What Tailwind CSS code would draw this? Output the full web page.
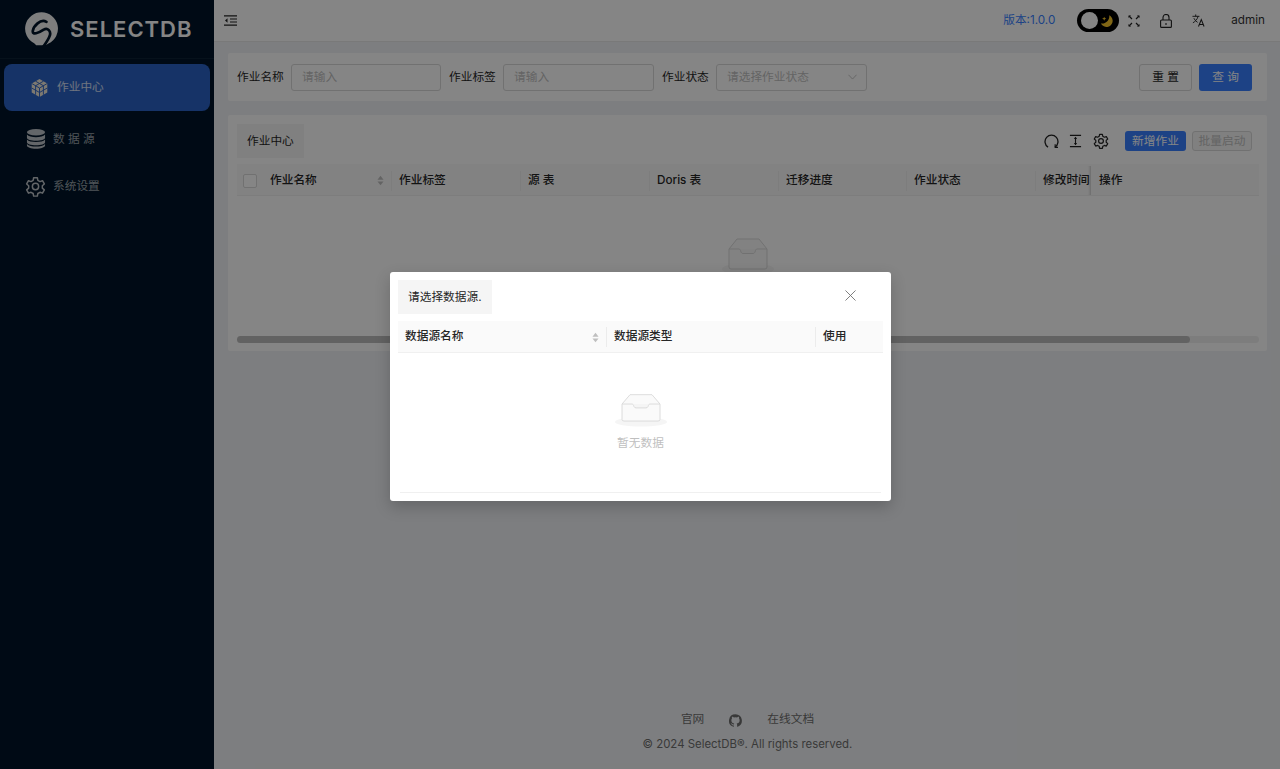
<!DOCTYPE html>
<html lang="zh">
<head>
<meta charset="utf-8">
<script src="https://cdn.jsdelivr.net/npm/@tailwindcss/browser@4"></script>
<title>SelectDB</title>
</head>
<body class="font-['Inter','Noto_Sans_CJK_SC',sans-serif] text-[11.7px] text-[#262626] overflow-hidden">
<div class="relative flex h-[769px] w-[1280px] bg-[#f0f2f5] overflow-hidden">

  <!-- Sidebar -->
  <aside class="w-[214px] shrink-0 bg-[#001529] text-white/60 flex flex-col">
    <div class="h-[59px] pl-[25px] flex items-center gap-[11px] border-b border-white/5">
      <svg viewBox="45 23 100 100" class="w-[34px] h-[34px] shrink-0">
        <path fill="#f2f2f2" d="M94 24a48 48 0 0 1 20 91.600L108 119 100 121 82 121 78 120.500 72 115A48 48 0 0 1 94 24z"/>
        <path fill="none" stroke="#001529" stroke-width="8" stroke-linecap="round" d="M108 52C90 42 70 65 68 78C66 92 85 85 100 75C112 68 122 80 118 92C114 105 108 112 98 126"/>
      </svg>
      <span class="text-[22px] leading-none font-semibold tracking-[1px] text-white">SELECTDB</span>
    </div>
    <nav class="flex flex-col mt-[5px]">
      <a class="mx-[4px] h-[47px] rounded-[8px] bg-[#2b62c6] flex items-center pl-[26px] gap-[8px] text-white/80">
        <svg viewBox="0 0 20 20" class="w-[19px] h-[20px]">
          <path fill="#f0e8d8" d="M10 .5l8.200 4.750v9.500L10 19.500l-8.200-4.750v-9.500z"/>
          <path fill="none" stroke="#2b62c6" stroke-width="1" d="M10 10L1.800 5.250M10 10l8.200-4.750M10 10v9.500M5.900 2.875l8.200 4.750M14.100 2.875L5.900 7.625M1.800 10L10 14.750M18.200 10L10 14.750M5.900 7.625v9.500M14.100 7.625v9.500"/>
        </svg>
        <span class="pt-[1px]">作业中心</span>
      </a>
      <a class="h-[47px] mt-[5px] flex items-center pl-[26px] gap-[7px]">
        <svg viewBox="0 0 21 22" class="w-[20px] h-[22px] mb-[1px]" fill="#fff" fill-opacity=".75">
          <ellipse cx="10.500" cy="4" rx="9.500" ry="3.400"/>
          <path d="M1 6.400c1.500 2 5.300 2.800 9.500 2.800S18.500 8.400 20 6.400v3.300c0 1.900-4.300 3.200-9.500 3.200S1 11.600 1 9.700z"/>
          <path d="M1 11.600c1.500 2 5.300 2.600 9.500 2.600s8-.6 9.500-2.600v2.800c0 1.900-4.300 3.200-9.500 3.200S1 16.300 1 14.400z"/>
          <path d="M1 16.300c1.500 2 5.300 2.700 9.500 2.700s8-.7 9.500-2.700v1.600c0 1.900-4.300 3.400-9.500 3.400S1 19.800 1 17.900z"/>
        </svg>
        <span class="pt-[1px]">数 据 源</span>
      </a>
      <a class="h-[47px] flex items-center pl-[25px] gap-[7px]">
        <svg viewBox="0 0 24 24" class="w-[21px] h-[21px]" fill="none" stroke="#fff" stroke-opacity=".75" stroke-width="1.700" stroke-linejoin="round">
          <path d="M9.900 2h4.200l.6 3 2.400 1.400 2.900-1 2.100 3.700-2.300 2v2.800l2.300 2-2.100 3.700-2.900-1-2.400 1.400-.6 3H9.900l-.6-3-2.400-1.400-2.900 1-2.100-3.700 2.300-2v-2.800l-2.300-2 2.100-3.700 2.900 1 2.400-1.400z"/>
          <circle cx="12" cy="12" r="3.600"/>
        </svg>
        <span class="pt-[1px]">系统设置</span>
      </a>
    </nav>
  </aside>

  <!-- Main -->
  <main class="flex-1 min-w-0 flex flex-col">
    <header class="h-[42px] bg-white border-b border-[#e8e8e8] flex items-center pl-[10px] pr-[15px] shrink-0">
      <svg viewBox="0 0 13 11" class="w-[13px] h-[11px]" fill="none" stroke="#222" stroke-width="1.200">
        <path d="M0 .8h13M6 4h7M6 7h7M0 10.200h13"/><path d="M3.500 3.200L1 5.500l2.500 2.300z" fill="#222" stroke="none"/>
      </svg>
      <div class="ml-auto flex items-center">
        <span class="text-[#387fff] mr-[22px] pt-[1px]">版本:1.0.0</span>
        <div class="w-[42px] h-[23px] rounded-full bg-black flex items-center justify-between pl-[4px] pr-[5px]">
          <span class="w-[17px] h-[17px] rounded-full bg-white"></span>
          <svg viewBox="0 0 16 16" class="w-[14px] h-[14px]" fill="#f7c52b"><path d="M10.500 1.500A7 7 0 1 1 1 10.500c4.500 1.500 10.500-3.500 9.500-9z"/><path d="M4.800 3l.7 1.700 1.700.7-1.700.7-.7 1.700-.7-1.700-1.700-.7 1.700-.7z"/></svg>
        </div>
        <svg viewBox="0 0 12 12" class="w-[12px] h-[12px] ml-[9px]" fill="none" stroke="#222" stroke-width="1.200"><path d="M1 1l3 3M11 1L8 4M1 11l3-3M11 11L8 8"/><path d="M.5.500h2.600L.5 3.100zM11.500.500H8.900l2.600 2.600zM.5 11.500h2.600L.5 8.900zM11.500 11.500H8.900l2.600-2.600z" fill="#222" stroke="none"/></svg>
        <svg viewBox="0 0 12 14" class="w-[12px] h-[14px] ml-[20px]" fill="none" stroke="#222" stroke-width="1.100"><rect x=".6" y="6" width="10.800" height="7.400" rx="1"/><path d="M3 6V3.500a3 3 0 0 1 6 0V6M6 9v2"/></svg>
        <svg viewBox="0 0 14 14" class="w-[13px] h-[13px] ml-[20px]" fill="none" stroke="#222" stroke-width="1"><path d="M.5 2.500h7.500M4 .5v2M6.500 2.500C6 5.500 3.500 8 1 9.500M2 4.500c.8 2 2.500 3.500 4 4.500"/><path d="M7 13.500l3-7.500 3 7.500M8 11.300h4" stroke-width="1.100"/></svg>
        <span class="ml-[26px] text-[#333] pt-[1px]">admin</span>
      </div>
    </header>

    <div class="flex-1 flex flex-col pl-[14px] pr-[13px] pt-[11px]">
      <!-- Search -->
      <section class="h-[48px] bg-white rounded-[2px] flex items-center pl-[9px] pr-[15px] shrink-0">
        <label class="w-[47px] pt-[2px]">作业名称</label>
        <div class="ml-[7px] w-[150px] h-[27px] border border-[#d9d9d9] rounded-[3px] flex items-center px-[10px] pt-[2px] text-[#bfbfbf]">请输入</div>
        <label class="ml-[8px] w-[47px] pt-[2px]">作业标签</label>
        <div class="ml-[7px] w-[151px] h-[27px] border border-[#d9d9d9] rounded-[3px] flex items-center px-[10px] pt-[2px] text-[#bfbfbf]">请输入</div>
        <label class="ml-[8px] w-[47px] pt-[2px]">作业状态</label>
        <div class="ml-[7px] w-[151px] h-[27px] border border-[#d9d9d9] rounded-[3px] flex items-center justify-between pl-[10px] pr-[9px] text-[#bfbfbf]">
          <span class="pt-[2px]">请选择作业状态</span>
          <svg viewBox="0 0 10 6" class="w-[9px] h-[6px]" fill="none" stroke="#bfbfbf"><path d="M.5.500L5 5.300 9.500.500"/></svg>
        </div>
        <button class="ml-auto w-[53px] h-[27px] border border-[#d9d9d9] rounded-[3px] pt-[2px] text-[#262626]">重 置</button>
        <button class="ml-[7px] w-[53px] h-[27px] rounded-[3px] bg-[#387fff] pt-[2px] text-white">查 询</button>
      </section>

      <!-- Table card -->
      <section class="mt-[14px] h-[236px] bg-white rounded-[2px] pl-[9px] pr-[8px] pt-[9px] shrink-0 flex flex-col">
        <div class="flex items-center h-[34px]">
          <div class="h-[34px] px-[10px] pt-[2px] bg-[#f5f5f5] flex items-center">作业中心</div>
          <div class="ml-auto flex items-center">
            <svg viewBox="0 0 16 16" class="w-[15px] h-[15px]" fill="none" stroke="#222" stroke-width="1.400"><path d="M4.300 14A6.900 6.900 0 1 1 11.700 14"/><path d="M11.900 10.900v3.400h3" stroke-width="1.200"/></svg>
            <svg viewBox="0 0 14 14" class="w-[13px] h-[14px] ml-[10px]" fill="none" stroke="#222" stroke-width="1.200"><path d="M1 1h12M1 13h12M7 3v8"/><path d="M7 2.300L5.300 4.800h3.400zM7 11.700l-1.700-2.500h3.400z" fill="#222" stroke="none"/></svg>
            <svg viewBox="0 0 24 24" class="w-[16px] h-[16px] ml-[11px]" fill="none" stroke="#222" stroke-width="1.800" stroke-linejoin="round">
              <path d="M9.900 2h4.200l.6 3 2.400 1.400 2.900-1 2.100 3.700-2.300 2v2.800l2.300 2-2.100 3.700-2.900-1-2.400 1.400-.6 3H9.900l-.6-3-2.400-1.400-2.900 1-2.100-3.700 2.300-2v-2.800l-2.300-2 2.100-3.700 2.900 1 2.400-1.400z"/>
              <circle cx="12" cy="12" r="3.600"/>
            </svg>
            <button class="ml-[16px] w-[61px] h-[20px] rounded-[3px] bg-[#387fff] pt-[1px] text-white">新增作业</button>
            <button class="ml-[6px] mr-[7px] w-[60px] h-[20px] rounded-[3px] border border-[#d9d9d9] bg-[#f5f5f5] pt-[1px] text-[#bfbfbf]">批量启动</button>
          </div>
        </div>
        <div class="mt-[6px] h-[32px] pt-[2px] bg-[#fafafa] border-b border-[#f0f0f0] flex items-center font-medium shrink-0">
          <div class="w-[33px] pl-[6px]"><span class="block w-[14px] h-[14px] border border-[#d9d9d9] rounded-[2px] bg-white"></span></div>
          <div class="w-[122px] flex items-center justify-between pr-[7px] border-r border-[#f0f0f0] h-[20px]">
            <span>作业名称</span>
            <svg viewBox="0 0 8 12" class="w-[7px] h-[11px]" fill="#bfbfbf"><path d="M4 .5l3.500 4.500h-7zM4 11.500L.5 7h7z"/></svg>
          </div>
          <div class="w-[129px] pl-[7px] border-r border-[#f0f0f0] h-[20px] flex items-center">作业标签</div>
          <div class="w-[129px] pl-[7px] border-r border-[#f0f0f0] h-[20px] flex items-center">源 表</div>
          <div class="w-[129px] pl-[7px] border-r border-[#f0f0f0] h-[20px] flex items-center">Doris 表</div>
          <div class="w-[128px] pl-[7px] border-r border-[#f0f0f0] h-[20px] flex items-center">迁移进度</div>
          <div class="w-[129px] pl-[7px] border-r border-[#f0f0f0] h-[20px] flex items-center">作业状态</div>
          <div class="w-[55px] pl-[7px] h-full flex items-center whitespace-nowrap shadow-[inset_-3px_0_3px_-2px_rgba(0,0,0,0.2)]">修改时间</div>
          <div class="pl-[8px]">操作</div>
        </div>
        <div class="flex-1 flex flex-col items-center pt-[40px]">
          <svg viewBox="0 0 52 40" class="w-[52px] h-[40px]" fill="#f5f5f5" stroke="#d9d9d9"><ellipse cx="26" cy="33" rx="26" ry="6" fill="#f5f5f5" stroke="none"/><path d="M7 13L15 3h22l8 10v18a2 2 0 0 1-2 2H9a2 2 0 0 1-2-2z" fill="#fafafa"/><path d="M7 13h10c1 0 1.500 1 2 3 .5 1 1 1.500 2 1.500h10c1 0 1.500-.5 2-1.500.5-2 1-3 2-3h10"/></svg>
        </div>
        <div class="h-[7px] mb-[8px] rounded-full bg-[#f0f0f0] shrink-0">
          <div class="h-full w-[953px] rounded-full bg-[#bdbdbd]"></div>
        </div>
      </section>

      <!-- Footer -->
      <footer class="mt-auto h-[59px] flex flex-col items-center text-[#6e6e6e]">
        <div class="flex items-center h-[20px]">
          <span>官网</span>
          <svg viewBox="0 0 16 16" class="w-[13px] h-[13px] ml-[25px]" fill="#6e6e6e"><path d="M8 .2a8 8 0 0 0-2.500 15.600c.4.100.5-.2.500-.4v-1.400c-2.200.5-2.700-1-2.700-1-.4-.9-.9-1.200-.9-1.200-.7-.5.100-.5.100-.5.800.100 1.200.8 1.200.8.700 1.200 1.900.9 2.300.7.100-.5.300-.9.500-1.100-1.800-.2-3.600-.9-3.600-4 0-.9.300-1.600.8-2.100-.1-.2-.4-1 .1-2.100 0 0 .7-.2 2.200.8a7.600 7.600 0 0 1 4 0c1.500-1 2.200-.8 2.200-.8.400 1.100.2 1.900.1 2.100.5.600.8 1.300.8 2.100 0 3.100-1.900 3.700-3.700 3.900.3.300.6.800.6 1.500v2.200c0 .2.100.5.600.4A8 8 0 0 0 8 .2z"/></svg>
          <span class="ml-[25px]">在线文档</span>
        </div>
        <div class="mt-[6px] text-[11.4px]">© 2024 SelectDB®. All rights reserved.</div>
      </footer>
    </div>
  </main>

  <!-- Mask -->
  <div class="absolute inset-0 bg-black/48"></div>

  <!-- Modal -->
  <div class="absolute left-[390px] top-[272px] w-[501px] h-[229px] bg-white rounded-[3px] shadow-[0_6px_16px_rgba(0,0,0,0.2)] p-[8px] flex flex-col">
    <div class="flex items-start justify-between h-[34px]">
      <div class="h-[34px] px-[10px] pt-[2px] bg-[#f5f5f5] flex items-center">请选择数据源.</div>
      <svg viewBox="0 0 12 12" class="w-[11px] h-[11px] mt-[10px] mr-[27px]" fill="none" stroke="#737373" stroke-width="1"><path d="M.5.500l11 11M11.500.500l-11 11"/></svg>
    </div>
    <div class="mt-[7px] h-[32px] pt-[1px] bg-[#fafafa] border-b border-[#f0f0f0] flex items-center font-medium shrink-0">
      <div class="w-[209px] pl-[7px] pr-[7px] h-[20px] flex items-center justify-between border-r border-[#ececec]">
        <span>数据源名称</span>
        <svg viewBox="0 0 8 12" class="w-[7px] h-[11px]" fill="#bfbfbf"><path d="M4 .5l3.500 4.500h-7zM4 11.500L.5 7h7z"/></svg>
      </div>
      <div class="w-[209px] pl-[7px] h-[20px] flex items-center border-r border-[#ececec]">数据源类型</div>
      <div class="pl-[7px]">使用</div>
    </div>
    <div class="flex-1 flex flex-col items-center pt-[40px]">
      <svg viewBox="0 0 52 40" class="w-[52px] h-[34px]" fill="#f5f5f5" stroke="#d9d9d9" preserveAspectRatio="none"><ellipse cx="26" cy="34" rx="26" ry="5.500" fill="#f5f5f5" stroke="none"/><path d="M7 13L15 2h22l8 11v18a2 2 0 0 1-2 2H9a2 2 0 0 1-2-2z" fill="#fafafa"/><path d="M7 13h10c1 0 1.500 1 2 3 .5 1 1 1.500 2 1.500h10c1 0 1.500-.5 2-1.500.5-2 1-3 2-3h10"/></svg>
      <span class="mt-[8px] text-[#bfbfbf]">暂无数据</span>
    </div>
    <div class="mx-[2px] border-t border-[#f0f0f0] h-[1px]"></div>
  </div>
</div>
</body>
</html>
